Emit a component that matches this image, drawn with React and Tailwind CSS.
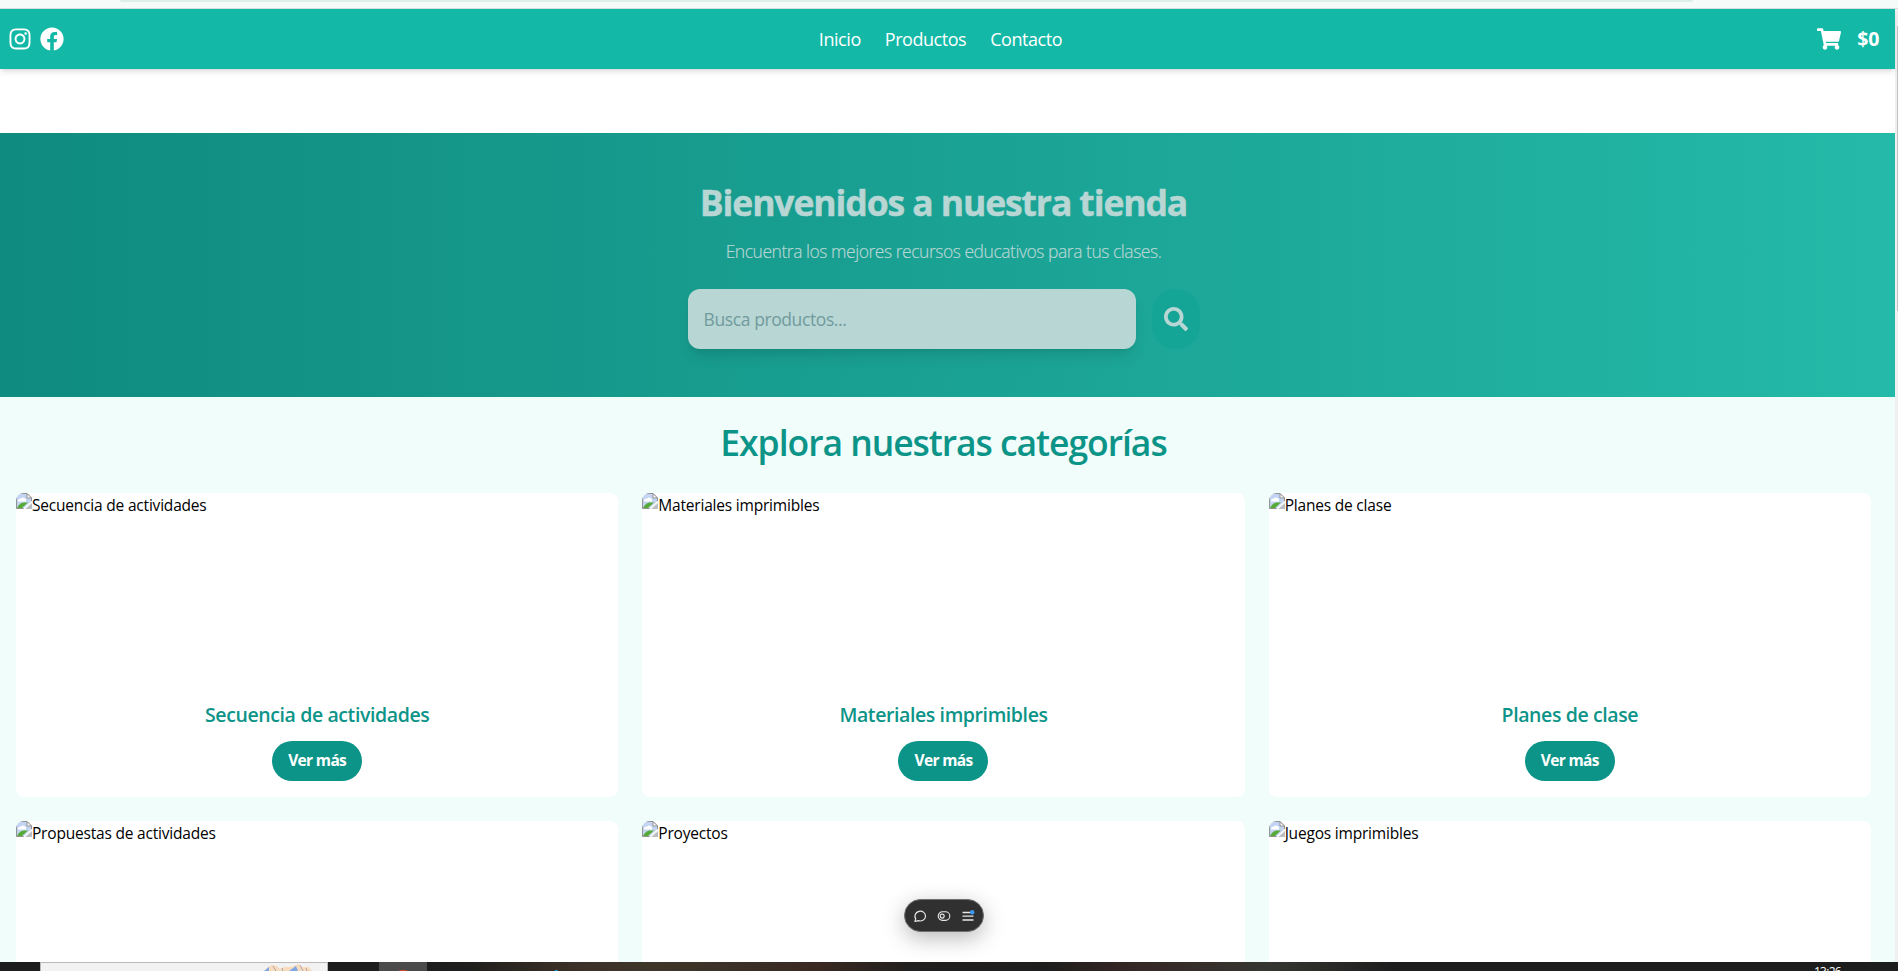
import { FaInstagram, FaFacebook, FaShoppingCart, FaSearch } from "react-icons/fa";

const CARDS = [
  { title: "Secuencia de actividades", body: true },
  { title: "Materiales imprimibles", body: true },
  { title: "Planes de clase", body: true },
  { title: "Propuestas de actividades", body: false },
  { title: "Proyectos", body: false },
  { title: "Juegos imprimibles", body: false },
];

function BrokenImage() {
  return (
    <svg width="16" height="16" viewBox="0 0 16 16" className="shrink-0">
      <path d="M0.500 0.500H11L15.500 5V9.500L9 15.500H0.500Z" fill="#c3d4f3" stroke="#929292" />
      <path d="M2 8.500a2.500 2.500 0 0 1 3-3 3 3 0 0 1 5 3Z" fill="#fff" />
      <path d="M1 15C3 11 5.500 9.500 8 9.500H12L6 15Z" fill="#55ab35" />
      <path d="M11 0.500V5H15.500Z" fill="#fff" stroke="#929292" />
      <path d="M16 10V16H9.500Z" fill="#b9bec5" />
      <path d="M8 16L16 8.500" stroke="#fff" strokeWidth="1.500" />
    </svg>
  );
}

function Card({ title, body }) {
  return (
    <article className="h-[304px] overflow-hidden rounded-lg bg-white">
      <div className="flex h-[200px] items-start">
        <BrokenImage />
        <span className="text-[15.5px] leading-6 tracking-[-0.2px] text-black">{title}</span>
      </div>
      {body && (
        <div className="flex flex-col items-center px-4 pt-2">
          <h3 className="text-[19.5px] leading-7 font-semibold tracking-[-0.4px] text-[#0d9488]">{title}</h3>
          <button className="mt-3 h-10 w-[90px] rounded-full bg-[#0d9488] text-[15.5px] font-bold tracking-[-0.65px] text-white">
            Ver más
          </button>
        </div>
      )}
    </article>
  );
}

function FloatingToolbar() {
  return (
    <div className="absolute top-[899px] left-[904px] flex h-[33px] w-[80px] items-center justify-center gap-2.5 rounded-full border border-[#6f6f6f] bg-[#303030] shadow-[0_6px_22px_rgba(0,0,0,0.28)]">
      <svg width="14" height="14" viewBox="0 0 14 14" fill="none" stroke="#e8e8e8" strokeWidth="1.200">
        <path d="M2 12.500L2.700 9.600A5.300 4.900 0 1 1 5.200 11.600Z" strokeLinejoin="round" />
      </svg>
      <svg width="14" height="14" viewBox="0 0 14 14" fill="none" stroke="#e8e8e8" strokeWidth="1.100">
        <rect x="1.200" y="2.800" width="11.600" height="8.600" rx="4.300" />
        <circle cx="5.200" cy="7.100" r="2" />
      </svg>
      <svg width="14" height="14" viewBox="0 0 14 14" fill="none" stroke="#e8e8e8" strokeWidth="1.300">
        <path d="M1.500 3.500H9M1.500 7.200H12.500M1.500 11H12.500" />
        <circle cx="11.200" cy="3.300" r="2.200" fill="#3b9bf5" stroke="none" />
      </svg>
    </div>
  );
}

function Taskbar() {
  return (
    <footer className="flex h-[9px] shrink-0 overflow-hidden bg-[#1d1d1d]">
      <div className="ml-10 flex w-[288px] shrink-0 justify-end border border-b-0 border-[#b9b9b9] bg-[#f2f2f2] pr-[15px]">
        <svg width="48" height="8" viewBox="0 0 48 8" className="shrink-0">
          <path d="M0 8L4 4L8 2L13 3L16 6L20 4L26 4L30 3L34 1L38 4L45 4L48 8Z" fill="#f7dcbf" />
          <path d="M0 8L5 4V8ZM25 8L32 3L34 8Z" fill="#7fa6e6" />
          <path d="M9 3L12 8M18 5L19 8M36 2L39 8M42 5L43 8" stroke="#b7a3a0" />
        </svg>
      </div>
      <div className="ml-[51px] flex w-12 shrink-0 justify-center bg-[#4b4b4b]">
        <svg width="10" height="9" viewBox="0 0 10 9">
          <path d="M0 9Q5 7 10 9Z" fill="#e8452f" />
        </svg>
      </div>
      <div className="flex flex-1 justify-between bg-[linear-gradient(90deg,#1d1d1d_0px,#1f1e1c_40px,#3c3128_150px,#3f3629_230px,#3a3026_320px,#3a2822_390px,#22201e_480px,#1e1e1c_620px,#352625_700px,#363631_840px,#1d1d1d_970px)]">
        <svg width="8" height="9" viewBox="0 0 8 9" className="ml-[125px]">
          <path d="M2 9L4 8H5.500V9Z" fill="#1ba1e2" />
        </svg>
        <span className="mt-[3px] mr-[57px] text-[12px] leading-[14px] tracking-[-0.7px] text-white">13:26</span>
      </div>
    </footer>
  );
}

export default function App() {
  return (
    <div className="relative flex h-[971px] w-[1898px] flex-col overflow-hidden bg-white font-['Open_Sans','Noto_Sans',sans-serif]">
      <div className="flex h-[9px] shrink-0 border-b border-[#d5dedb] bg-[#f4fbf9] pl-[120px]">
        <div className="h-[2px] w-[1573px] rounded-b-full bg-[#dcefe9]" />
      </div>
      <div className="flex h-[953px] shrink-0 overflow-hidden">
        <div className="flex w-[1895px] flex-col">
          <header className="z-10 flex h-[60px] shrink-0 items-center justify-between bg-[#14b8a6] pr-4 pl-2 text-white shadow-md">
            <div className="flex w-[200px] gap-2">
              <FaInstagram size={24} />
              <FaFacebook size={24} />
            </div>
            <nav className="flex gap-6 text-[18px] tracking-[-0.45px]">
              <a>Inicio</a>
              <a>Productos</a>
              <a>Contacto</a>
            </nav>
            <div className="flex w-[206px] items-center justify-end gap-4">
              <FaShoppingCart size={24} />
              <span className="text-[19.5px] font-bold tracking-[-0.3px]">$0</span>
            </div>
          </header>
          <section className="mt-16 flex h-[264px] shrink-0 flex-col items-center bg-linear-to-r from-[#0f8b7f] to-[#24b9a8] pt-[49px] pr-2 text-[#b7d6d4]">
            <h1 className="text-[35.5px] leading-10 font-bold tracking-[-1.1px] [-webkit-text-stroke:0.5px_#b7d6d4]">
              Bienvenidos a nuestra tienda
            </h1>
            <p className="mt-[15px] text-[17.5px] leading-7 font-light tracking-[-0.47px] [-webkit-text-stroke:0.2px_#b7d6d4]">
              Encuentra los mejores recursos educativos para tus clases.
            </p>
            <div className="mt-6 flex gap-4">
              <div className="flex h-[60px] w-[448px] items-center rounded-xl bg-[#b7d6d4] px-4 text-[17.5px] tracking-[-0.4px] text-[#729b9d] shadow-lg">
                Busca productos...
              </div>
              <button className="flex h-[60px] w-12 items-center justify-center rounded-full bg-[#14a596]">
                <FaSearch size={24} />
              </button>
            </div>
          </section>
          <main className="h-[565px] shrink-0 overflow-hidden bg-[#f0fdfa] pt-[21px] pr-6 pl-4">
            <h2 className="text-center text-[35.5px] leading-[48px] font-semibold tracking-[-1.05px] text-[#0d9488]">
              Explora nuestras categorías
            </h2>
            <div className="mt-[27px] grid grid-cols-3 gap-6">
              {CARDS.map((c) => (
                <Card key={c.title} title={c.title} body={c.body} />
              ))}
            </div>
          </main>
        </div>
        <div className="w-[3px] bg-[#f0f0f0] pt-[17px] pl-[2px]">
          <div className="h-[285px] bg-[#c1c1c1]" />
        </div>
      </div>
      <Taskbar />
      <FloatingToolbar />
    </div>
  );
}
